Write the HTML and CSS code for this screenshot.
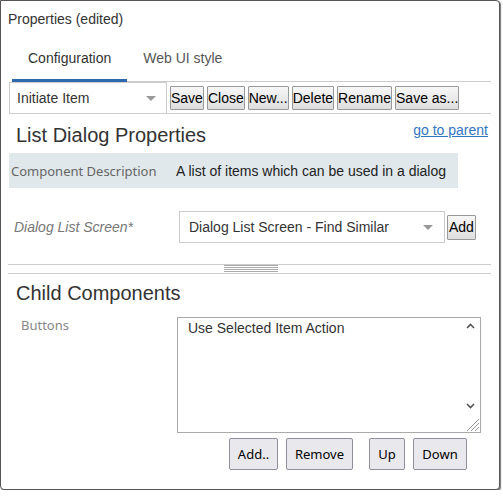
FILE: index.html
```html
<!DOCTYPE html>
<html>
<head>
<meta charset="utf-8">
<link rel="stylesheet" href="styles.css">
</head>
<body>
<div class="frame">
  <div class="title">Properties (edited)</div>
  <div class="tabs">
    <div class="tab active">Configuration</div>
    <div class="tab">Web UI style</div>
  </div>
  <div class="toolbar">
    <div class="select sel1"><span>Initiate Item</span><i class="caret"></i></div>
    <button class="tbtn">Save</button>
    <button class="tbtn">Close</button>
    <button class="tbtn">New...</button>
    <button class="tbtn">Delete</button>
    <button class="tbtn">Rename</button>
    <button class="tbtn">Save as...</button>
  </div>
  <div class="head">
    <h2 class="h2">List Dialog Properties</h2>
    <a class="link" href="#">go to parent</a>
  </div>
  <div class="desc">
    <div class="desc-label">Component Description</div>
    <div class="desc-value">A list of items which can be used in a dialog</div>
  </div>
  <div class="field">
    <div class="field-label">Dialog List Screen*</div>
    <div class="select sel2"><span>Dialog List Screen - Find Similar</span><i class="caret"></i></div>
    <button class="tbtn addbtn">Add</button>
  </div>
  <div class="splitter"><div class="grip"></div></div>
  <h2 class="h2 child">Child Components</h2>
  <div class="listrow">
    <div class="list-label">Buttons</div>
    <div class="listbox">
      <div class="item">Use Selected Item Action</div>
      <svg class="chev up" width="9" height="6" viewBox="0 0 9 6"><polyline points="1,5 4.5,1.5 8,5" fill="none" stroke="#555" stroke-width="1.6"/></svg>
      <svg class="chev down" width="9" height="6" viewBox="0 0 9 6"><polyline points="1,1 4.5,4.5 8,1" fill="none" stroke="#555" stroke-width="1.6"/></svg>
      <svg class="resize" width="15" height="15" viewBox="0 0 15 15"><path d="M14 2 L2 14 M14 6 L6 14 M14 10 L10 14" stroke="#999" stroke-width="1"/></svg>
    </div>
  </div>
  <div class="btnrow">
    <button class="bbtn w-add">Add..</button>
    <button class="bbtn w-remove">Remove</button>
    <button class="bbtn w-up">Up</button>
    <button class="bbtn w-down">Down</button>
  </div>
</div>
</body>
</html>
```

FILE: styles.css
```css
* { box-sizing: border-box; }
html, body { margin: 0; padding: 0; background: #fff; }
body { font-family: "Liberation Sans", Arial, sans-serif; color: #333; }

.frame {
  width: 500px;
  height: 490px;
  border: 1px solid #555;
  border-radius: 0 4px 4px 4px;
  box-shadow: 1px 1px 1px #777;
  background: #fff;
}

.title {
  margin: 10px 0 0 7px;
  font-size: 14px;
  line-height: 16px;
  height: 16px;
  color: #333;
}

.tabs {
  display: flex;
  margin: 0 8px 0 11px;
  border-bottom: 1px solid #ccc;
}
.tab {
  padding: 23px 16px 13px;
  font-size: 14px;
  line-height: 16px;
  margin-bottom: -1px;
  border-bottom: 3px solid transparent;
  color: #555;
}
.tab.active { border-bottom-color: #2e6aad; color: #333; }

.toolbar {
  display: flex;
  align-items: flex-start;
  gap: 3px;
  margin: 0 8px;
  height: 32px;
  border-bottom: 1px solid #ccc;
}
.select {
  display: flex;
  align-items: center;
  justify-content: space-between;
  height: 32px;
  border: 1px solid #ccc;
  background: #fff;
  font-size: 14px;
  color: #333;
}
.sel1 { width: 158px; margin-bottom: -1px; padding: 0 10px 0 7px; }
.sel2 { width: 266px; padding: 0 11px 0 9px; }
.caret {
  width: 0; height: 0;
  border-left: 5px solid transparent;
  border-right: 5px solid transparent;
  border-top: 5px solid #999;
}

.tbtn {
  margin-top: 4px;
  height: 24px;
  padding: 0;
  border: 1px solid #999;
  border-radius: 1px;
  background: linear-gradient(#f7f7f7, #dedede);
  font-family: "Liberation Sans", Arial, sans-serif;
  font-size: 14px;
  color: #000;
}

.head {
  display: flex;
  justify-content: space-between;
  align-items: flex-start;
  margin: 10px 11px 0 15px;
}
.h2 {
  margin: 0;
  font-weight: normal;
  font-size: 20px;
  line-height: 23px;
  color: #333;
}
.link {
  margin-top: -2px;
  font-size: 14px;
  line-height: 16px;
  color: #3275c0;
  text-decoration: underline;
}

.desc {
  display: grid;
  grid-template-columns: 167px 1fr;
  align-items: center;
  width: 449px;
  height: 35px;
  margin: 6px 0 0 8px;
  background: #e0e8eb;
}
.desc-label {
  padding-left: 2px;
  font-family: "Noto Sans", sans-serif;
  font-size: 13px;
  color: #666;
}
.desc-value { font-size: 14px; color: #222; }

.field {
  display: flex;
  align-items: center;
  margin: 23px 0 0 8px;
}
.field-label {
  width: 170px;
  padding-left: 5px;
  font-size: 14px;
  font-style: italic;
  color: #777;
}
.addbtn { margin: 0 0 0 2px; height: 25px; padding: 0 1px; }

.splitter {
  margin: 21px 8px 0 7px;
  height: 10px;
  border-top: 1px solid #ccc;
  border-bottom: 1px solid #ccc;
}
.grip {
  width: 54px;
  height: 7px;
  margin-left: 216px;
  background: repeating-linear-gradient(to bottom, #aaa 0 1px, transparent 1px 2px);
}

.child { margin: 8px 0 0 15px; }

.listrow {
  display: flex;
  align-items: flex-start;
  margin-top: 12px;
  padding-left: 20px;
}
.list-label {
  width: 156px;
  margin-top: -1px;
  font-family: "Noto Sans", sans-serif;
  font-size: 13px;
  line-height: 18px;
  color: #888;
}
.listbox {
  position: relative;
  width: 304px;
  height: 116px;
  border: 1px solid #aaa;
  padding: 2px 10px;
  font-size: 14px;
  line-height: 16px;
  color: #333;
}
.chev { position: absolute; left: 288px; display: block; }
.chev.up { top: 5px; }
.chev.down { top: 85px; }
.resize { position: absolute; right: 0; bottom: 0; display: block; }

.btnrow {
  display: flex;
  margin-top: 5px;
  padding-left: 228px;
}
.bbtn {
  height: 32px;
  padding: 0;
  border: 1px solid #8f8f9d;
  border-radius: 2px;
  background: #e9e9ed;
  font-family: "Noto Sans", sans-serif;
  font-size: 13px;
  color: #000;
}
.w-add { width: 49px; margin-right: 8px; }
.w-remove { width: 67px; margin-right: 16px; }
.w-up { width: 36px; margin-right: 8px; }
.w-down { width: 54px; }
```
